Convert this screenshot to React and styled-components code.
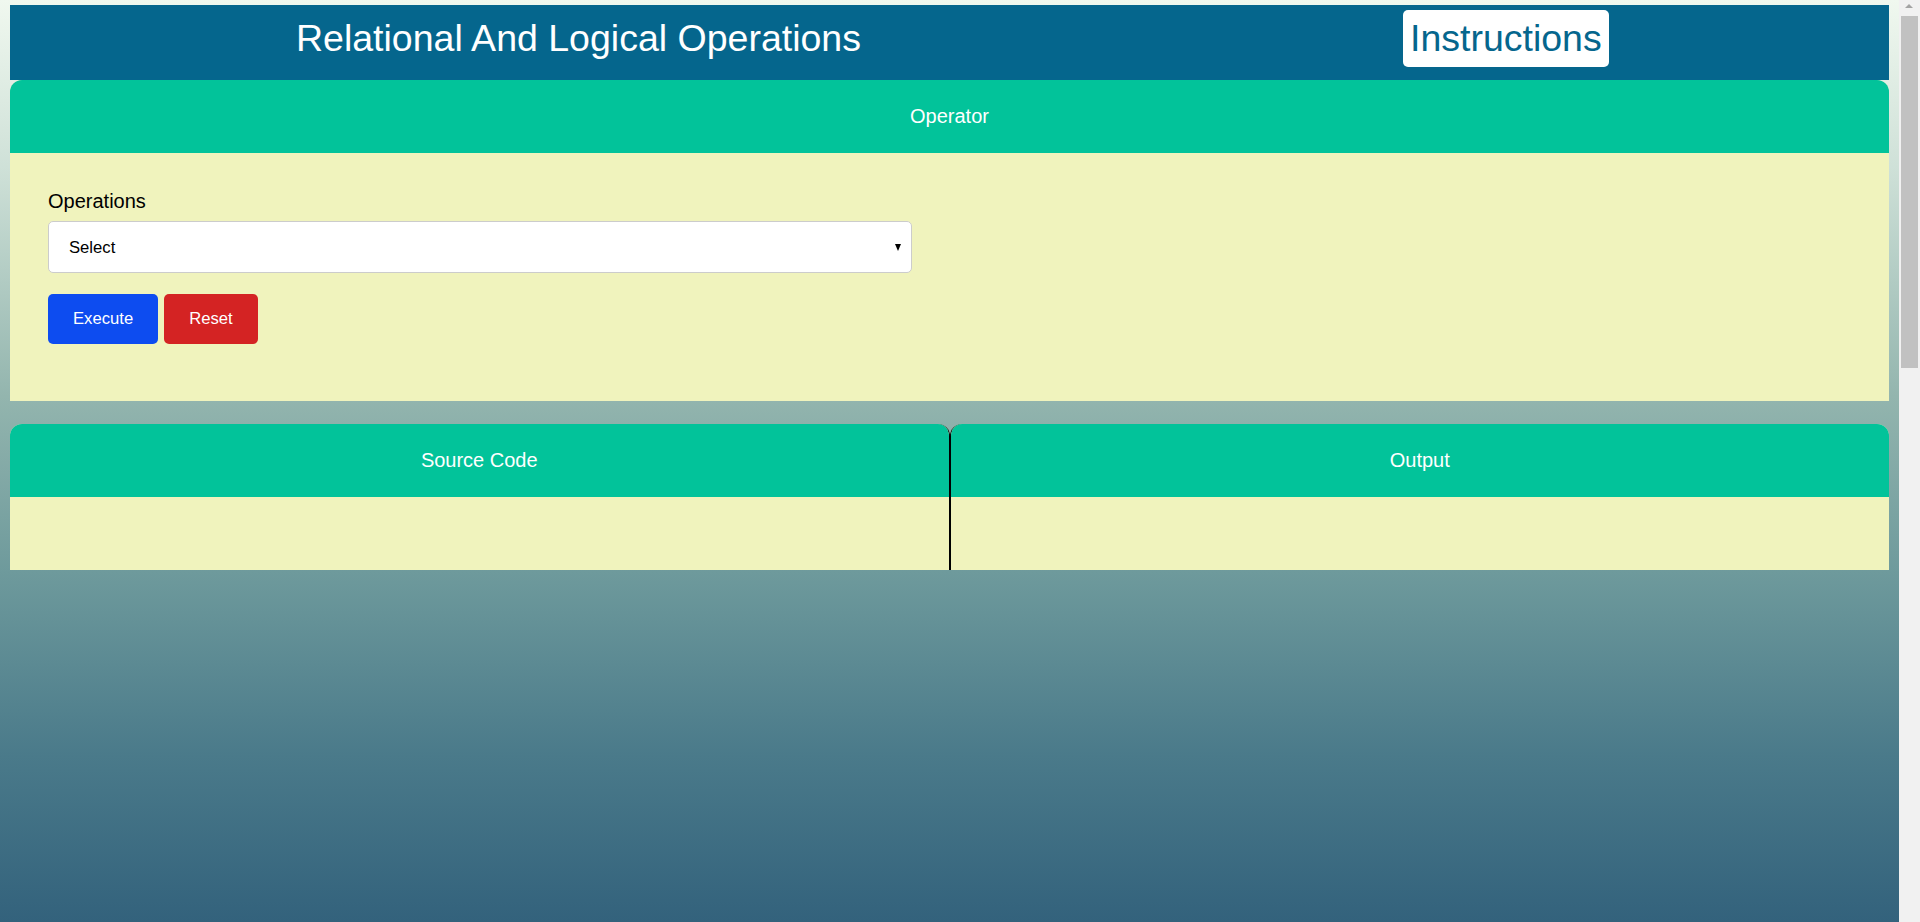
import React from "react";
import styled, { createGlobalStyle } from "styled-components";

const GlobalStyle = createGlobalStyle`
  html {
    min-height: 100%;
    background: linear-gradient(180deg, #f0f8ef 0%, #cfe1d8 18%, #93b5ae 43%, #6e9a9c 62%, #4a7a8a 82%, #33627c 100%) fixed;
  }
  body {
    margin: 5px 31px 0 10px;
    font-family: "Liberation Sans", Arial, sans-serif;
  }
`;

const ScrollRail = styled.div`
  position: fixed;
  top: 0;
  right: 0;
  width: 21px;
  height: 100vh;
  background: #f1f1f1;
`;

const ScrollArrow = styled.span`
  position: absolute;
  top: 4px;
  left: 6px;
  width: 0;
  height: 0;
  border-left: 4.5px solid transparent;
  border-right: 4.5px solid transparent;
  border-bottom: 4.5px solid #a3a3a3;
`;

const ScrollThumb = styled.span`
  position: absolute;
  top: 16px;
  left: 2px;
  right: 2px;
  height: 352px;
  background: #c1c1c1;
`;

const TopBar = styled.header`
  display: flex;
  align-items: center;
  gap: 542px;
  height: 75px;
  box-sizing: border-box;
  padding: 0 0 8px 286px;
  background: #05668d;
`;

const Title = styled.h1`
  margin: 0;
  font-size: 37.5px;
  font-weight: normal;
  line-height: 43px;
  color: #ffffff;
  white-space: nowrap;
`;

const InstructionsButton = styled.button`
  height: 57px;
  padding: 0 7px;
  border: none;
  border-radius: 5px;
  background: #ffffff;
  color: #05668d;
  font-family: inherit;
  font-size: 37.5px;
  line-height: 43px;
  cursor: pointer;
`;

const Card = styled.section`
  display: flex;
  flex-direction: column;
  border-radius: 12px 12px 0 0;
  overflow: hidden;
  background: #f0f3bd;
  ${(p) => (p.$divider === "right" ? "border-right: 1px solid #000;" : "")}
  ${(p) => (p.$divider === "left" ? "border-left: 1px solid #000;" : "")}
`;

const CardHead = styled.div`
  padding: 25px;
  background: #02c39a;
  color: #ffffff;
  font-size: 20px;
  line-height: 23px;
  text-align: center;
`;

const CardBody = styled.div`
  padding: ${(p) => p.$pad || "0"};
  min-height: ${(p) => p.$minH || "0"};
  box-sizing: border-box;
`;

const FieldLabel = styled.label`
  display: block;
  margin-bottom: 8px;
  font-size: 20px;
  line-height: 23px;
  color: #000;
`;

const SelectWrap = styled.div`
  position: relative;
  width: 864px;
  margin-bottom: 21px;
`;

const Select = styled.select`
  display: block;
  width: 100%;
  height: 52px;
  box-sizing: border-box;
  padding: 0 20px;
  border: 1px solid #cccccc;
  border-radius: 5px;
  background: #ffffff;
  color: #000;
  font-family: inherit;
  font-size: 16.67px;
  appearance: none;
  -webkit-appearance: none;
  outline: none;
`;

const Caret = styled.span`
  position: absolute;
  right: 11px;
  top: 23px;
  width: 0;
  height: 0;
  border-left: 3.5px solid transparent;
  border-right: 3.5px solid transparent;
  border-top: 7px solid #000;
  pointer-events: none;
`;

const ButtonRow = styled.div`
  display: flex;
  gap: 6px;
`;

const ActionButton = styled.button`
  height: 50px;
  padding: 0 25px;
  border: none;
  border-radius: 5px;
  background: ${(p) => p.$bg};
  color: #ffffff;
  font-family: inherit;
  font-size: 16.67px;
  cursor: pointer;
`;

const Split = styled.div`
  display: grid;
  grid-template-columns: 1fr 1fr;
  margin-top: 23px;
`;

export default function App() {
  return (
    <>
      <GlobalStyle />
      <TopBar>
        <Title>Relational And Logical Operations</Title>
        <InstructionsButton>Instructions</InstructionsButton>
      </TopBar>

      <Card>
        <CardHead>Operator</CardHead>
        <CardBody $pad="37px 38px 57px">
          <FieldLabel htmlFor="ops">Operations</FieldLabel>
          <SelectWrap>
            <Select id="ops" defaultValue="">
              <option value="">Select</option>
              <option value="rel">Relational</option>
              <option value="log">Logical</option>
            </Select>
            <Caret />
          </SelectWrap>
          <ButtonRow>
            <ActionButton $bg="#0d4cf0">Execute</ActionButton>
            <ActionButton $bg="#d42323">Reset</ActionButton>
          </ButtonRow>
        </CardBody>
      </Card>

      <Split>
        <Card $divider="right">
          <CardHead>Source Code</CardHead>
          <CardBody $minH="73px" />
        </Card>
        <Card $divider="left">
          <CardHead>Output</CardHead>
          <CardBody $minH="73px" />
        </Card>
      </Split>

      <ScrollRail aria-hidden="true">
        <ScrollArrow />
        <ScrollThumb />
      </ScrollRail>
    </>
  );
}
